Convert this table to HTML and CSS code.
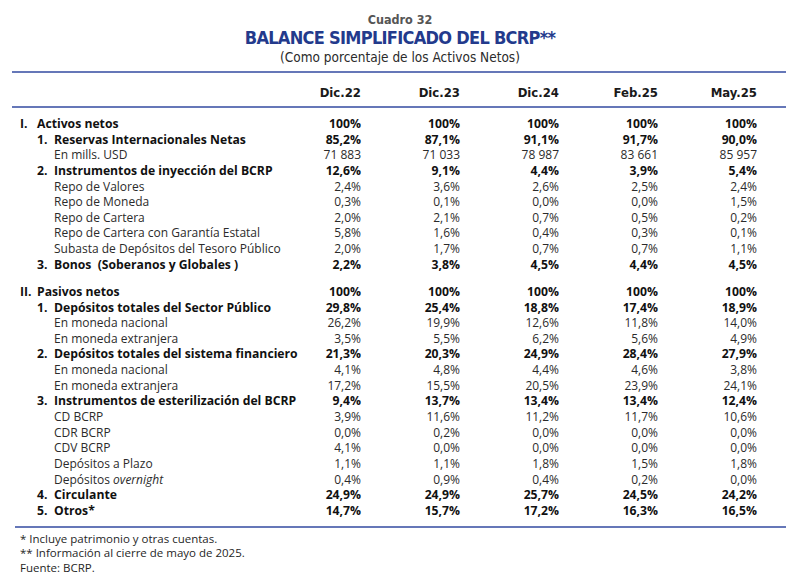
FILE: index.html
```html
<!DOCTYPE html>
<html lang="es">
<head>
<meta charset="utf-8">
<link rel="stylesheet" href="styles.css">
</head>
<body>
<div class="page">
  <div class="head">
    <div class="cuadro">Cuadro 32</div>
    <div class="title">BALANCE SIMPLIFICADO DEL BCRP**</div>
    <div class="subtitle">(Como porcentaje de los Activos Netos)</div>
  </div>
  <div class="table">
    <div class="hrow">
      <div></div><div>Dic.22</div><div>Dic.23</div><div>Dic.24</div><div>Feb.25</div><div>May.25</div>
    </div>
    <div class="body">
      <div class="row b"><div class="lbl l0"><span class="n">I.</span>Activos netos</div><div>100%</div><div>100%</div><div>100%</div><div>100%</div><div>100%</div></div>
      <div class="row b"><div class="lbl l1"><span class="n">1.</span>Reservas Internacionales Netas</div><div>85,2%</div><div>87,1%</div><div>91,1%</div><div>91,7%</div><div>90,0%</div></div>
      <div class="row"><div class="lbl l2">En mills. USD</div><div>71 883</div><div>71 033</div><div>78 987</div><div>83 661</div><div>85 957</div></div>
      <div class="row b"><div class="lbl l1"><span class="n">2.</span>Instrumentos de inyección del BCRP</div><div>12,6%</div><div>9,1%</div><div>4,4%</div><div>3,9%</div><div>5,4%</div></div>
      <div class="row"><div class="lbl l2">Repo de Valores</div><div>2,4%</div><div>3,6%</div><div>2,6%</div><div>2,5%</div><div>2,4%</div></div>
      <div class="row"><div class="lbl l2">Repo de Moneda</div><div>0,3%</div><div>0,1%</div><div>0,0%</div><div>0,0%</div><div>1,5%</div></div>
      <div class="row"><div class="lbl l2">Repo de Cartera</div><div>2,0%</div><div>2,1%</div><div>0,7%</div><div>0,5%</div><div>0,2%</div></div>
      <div class="row"><div class="lbl l2">Repo de Cartera con Garantía Estatal</div><div>5,8%</div><div>1,6%</div><div>0,4%</div><div>0,3%</div><div>0,1%</div></div>
      <div class="row"><div class="lbl l2">Subasta de Depósitos del Tesoro Público</div><div>2,0%</div><div>1,7%</div><div>0,7%</div><div>0,7%</div><div>1,1%</div></div>
      <div class="row b"><div class="lbl l1"><span class="n">3.</span>Bonos &nbsp;(Soberanos y Globales )</div><div>2,2%</div><div>3,8%</div><div>4,5%</div><div>4,4%</div><div>4,5%</div></div>

      <div class="row b sec"><div class="lbl l0"><span class="n">II.</span>Pasivos netos</div><div>100%</div><div>100%</div><div>100%</div><div>100%</div><div>100%</div></div>
      <div class="row b"><div class="lbl l1"><span class="n">1.</span>Depósitos totales del Sector Público</div><div>29,8%</div><div>25,4%</div><div>18,8%</div><div>17,4%</div><div>18,9%</div></div>
      <div class="row"><div class="lbl l2">En moneda nacional</div><div>26,2%</div><div>19,9%</div><div>12,6%</div><div>11,8%</div><div>14,0%</div></div>
      <div class="row"><div class="lbl l2">En moneda extranjera</div><div>3,5%</div><div>5,5%</div><div>6,2%</div><div>5,6%</div><div>4,9%</div></div>
      <div class="row b"><div class="lbl l1"><span class="n">2.</span>Depósitos totales del sistema financiero</div><div>21,3%</div><div>20,3%</div><div>24,9%</div><div>28,4%</div><div>27,9%</div></div>
      <div class="row"><div class="lbl l2">En moneda nacional</div><div>4,1%</div><div>4,8%</div><div>4,4%</div><div>4,6%</div><div>3,8%</div></div>
      <div class="row"><div class="lbl l2">En moneda extranjera</div><div>17,2%</div><div>15,5%</div><div>20,5%</div><div>23,9%</div><div>24,1%</div></div>
      <div class="row b"><div class="lbl l1"><span class="n">3.</span>Instrumentos de esterilización del BCRP</div><div>9,4%</div><div>13,7%</div><div>13,4%</div><div>13,4%</div><div>12,4%</div></div>
      <div class="row"><div class="lbl l2">CD BCRP</div><div>3,9%</div><div>11,6%</div><div>11,2%</div><div>11,7%</div><div>10,6%</div></div>
      <div class="row"><div class="lbl l2">CDR BCRP</div><div>0,0%</div><div>0,2%</div><div>0,0%</div><div>0,0%</div><div>0,0%</div></div>
      <div class="row"><div class="lbl l2">CDV BCRP</div><div>4,1%</div><div>0,0%</div><div>0,0%</div><div>0,0%</div><div>0,0%</div></div>
      <div class="row"><div class="lbl l2">Depósitos a Plazo</div><div>1,1%</div><div>1,1%</div><div>1,8%</div><div>1,5%</div><div>1,8%</div></div>
      <div class="row"><div class="lbl l2">Depósitos <i>overnight</i></div><div>0,4%</div><div>0,9%</div><div>0,4%</div><div>0,2%</div><div>0,0%</div></div>
      <div class="row b"><div class="lbl l1"><span class="n">4.</span>Circulante</div><div>24,9%</div><div>24,9%</div><div>25,7%</div><div>24,5%</div><div>24,2%</div></div>
      <div class="row b"><div class="lbl l1"><span class="n">5.</span>Otros*</div><div>14,7%</div><div>15,7%</div><div>17,2%</div><div>16,3%</div><div>16,5%</div></div>
    </div>
  </div>
  <div class="notes">
    <div>* Incluye patrimonio y otras cuentas.</div>
    <div>** Información al cierre de mayo de 2025.</div>
    <div>Fuente: BCRP.</div>
  </div>
</div>
</body>
</html>
```
FILE: styles.css
```css
html, body {
  margin: 0;
  padding: 0;
  background: #ffffff;
}
body {
  font-family: "Open Sans", "Noto Sans", sans-serif;
  font-size: 12px;
  color: #2b2b2b;
}
.page {
  width: 800px;
  height: 582px;
  box-sizing: border-box;
}
.head {
  text-align: center;
  box-sizing: border-box;
  height: 71px;
  padding-top: 12px;
  font-family: "DejaVu Sans Condensed", "DejaVu Sans", sans-serif;
}
.cuadro {
  font-weight: bold;
  font-size: 12.5px;
  line-height: 16px;
  color: #555555;
}
.title {
  font-weight: bold;
  font-size: 18px;
  line-height: 20px;
  letter-spacing: -0.7px;
  color: #233a8c;
}
.subtitle {
  font-size: 13.5px;
  line-height: 18px;
  color: #2b2b2b;
}
.table {
  margin-left: 12px;
  width: 774px;
}
.hrow {
  display: grid;
  grid-template-columns: 250px repeat(5, 99px);
  border-top: 2px solid #6577b8;
  border-bottom: 2px solid #6577b8;
  height: 21px;
  padding-top: 12px;
  line-height: 16px;
  align-items: start;
  font-family: "DejaVu Sans Condensed", "DejaVu Sans", sans-serif;
  font-weight: bold;
  font-size: 13px;
  color: #1a1a1a;
}
.hrow > div {
  text-align: right;
}
.body {
  padding-top: 8px;
  padding-bottom: 7px;
  border-bottom: 2px solid #6577b8;
  margin-left: 3px;
}
.row {
  display: grid;
  grid-template-columns: 247px repeat(5, 99px);
  height: 15.65px;
  line-height: 15.65px;
  white-space: nowrap;
}
.row > div {
  text-align: right;
}
.row > .lbl {
  text-align: left;
}
.row.b {
  font-weight: bold;
  font-size: 12.2px;
  color: #111111;
}
.row.sec {
  margin-top: 11.5px;
}
.lbl.l0 {
  padding-left: 5px;
}
.lbl.l1 {
  padding-left: 22px;
}
.lbl.l2 {
  padding-left: 39px;
}
.n {
  display: inline-block;
  width: 17px;
}
.notes {
  margin-left: 20px;
  padding-top: 4px;
  font-size: 11.5px;
  line-height: 14.5px;
  color: #1f1f1f;
}
```
